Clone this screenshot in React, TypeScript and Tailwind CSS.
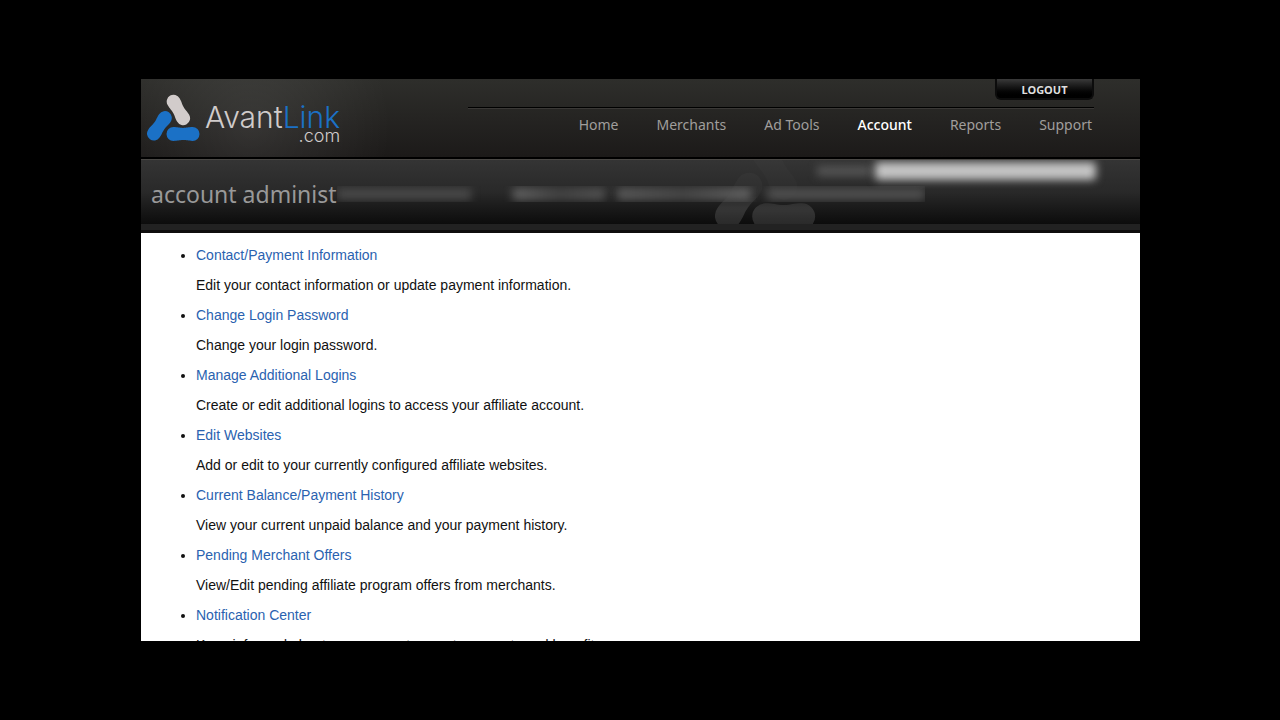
const NAV = ['Home', 'Merchants', 'Ad Tools', 'Account', 'Reports', 'Support'];

const ITEMS = [
  ['Contact/Payment Information', 'Edit your contact information or update payment information.'],
  ['Change Login Password', 'Change your login password.'],
  ['Manage Additional Logins', 'Create or edit additional logins to access your affiliate account.'],
  ['Edit Websites', 'Add or edit to your currently configured affiliate websites.'],
  ['Current Balance/Payment History', 'View your current unpaid balance and your payment history.'],
  ['Pending Merchant Offers', 'View/Edit pending affiliate program offers from merchants.'],
  ['Notification Center', 'Keep informed about your account, recent payments and benefits.'],
];

const BONE =
  'M-9.6 -6.9C-5 -6.9 -4 -6 0 -6S5 -6.9 9.6 -6.9A6.9 6.9 0 0 1 9.6 6.9C5 6.9 4 6 0 6S-5 6.9 -9.6 6.9A6.9 6.9 0 0 1 -9.6 -6.9Z';

function LogoMark({ className, top, base }: { className: string; top: string; base: string }) {
  return (
    <svg className={className} viewBox="0 0 54 48" aria-hidden="true">
      <path d={BONE} fill={top} transform="translate(31.4 15.9) rotate(60)" />
      <path d={BONE} fill={base} transform="translate(12.4 31.8) rotate(-55)" />
      <path d={BONE} fill={base} transform="translate(36 40)" />
    </svg>
  );
}

function Header() {
  return (
    <header className="flex h-20 shrink-0 justify-between border-b-2 border-black bg-[radial-gradient(circle_at_110px_48px,#ffffff16,transparent_140px),linear-gradient(#2e2e2b,#1c1a19)] pl-1.5">
      <a href="#" className="flex items-start pt-[15px]">
        <LogoMark className="h-12 w-[54px]" top="#d2cccb" base="#1b71c6" />
        <span className="flex flex-col items-end pl-1 pt-2.5 font-['Inter',sans-serif] font-light text-[#d0cccb]">
          <span className="text-3xl leading-[26px]">
            Avant<span className="text-[#1b71c6]">Link</span>
          </span>
          <span className="-mt-0.5 text-lg leading-4">.com</span>
        </span>
      </a>
      <div className="mr-[46px] flex w-[63%] flex-col font-['Noto_Sans',sans-serif]">
        <button
          type="button"
          className="h-[21px] w-[99px] self-end rounded-b-md border-2 border-t-0 border-[#0c0c0c] bg-linear-to-b from-[#3a3a3a] to-black pt-0.5 text-[11px] font-bold leading-4 text-[#dedede]"
        >
          LOGOUT
        </button>
        <nav className="mt-[7px] flex justify-end gap-[38px] border-t border-black pr-0.5 pt-[7px] text-sm text-[#a09e9c] shadow-[inset_0_1px_#3a3836]">
          {NAV.map((n) => (
            <a key={n} href="#" className={n === 'Account' ? 'font-medium text-white' : ''}>
              {n}
            </a>
          ))}
        </nav>
      </div>
    </header>
  );
}

function TitleBar() {
  return (
    <div className="shrink-0 border-b-3 border-[#0e0d0d]">
      <div className="relative flex h-[65px] items-center overflow-hidden border-t border-[#4a4845] bg-linear-to-b from-[#343434] via-[#292929] to-[#0c0c0c] pl-2.5 pt-1">
        <LogoMark
          className="absolute -top-5 left-[574px] h-[92px] w-[103px] opacity-12 [mask-image:linear-gradient(#0003_60%,#000_75%)]"
          top="#aaa"
          base="#fff"
        />
        <h1 className="font-['Noto_Sans',sans-serif] text-[23px] text-[#999]">account administ</h1>
        <div className="flex h-4 items-center overflow-hidden" aria-hidden="true">
          <span className="mr-[42px] h-3 w-[134px] bg-[#484848] blur-[4px]" />
          <span className="mr-3 h-3 w-[92px] bg-linear-to-r from-[#666] via-[#444] to-[#555] blur-[5px]" />
          <span className="mr-4 h-3 w-[134px] bg-linear-to-r from-[#5c5c5c] via-[#484848] to-[#666] blur-[5px]" />
          <span className="h-3 w-[158px] bg-[#505050] blur-[5px]" />
        </div>
        <div className="absolute right-11 top-0.5 flex items-center gap-1" aria-hidden="true">
          <span className="h-2.5 w-[54px] bg-[#555] blur-[4px]" />
          <span className="h-[18px] w-[221px] rounded-sm bg-[#c4c4c4] blur-[4px]" />
        </div>
      </div>
      <div className="h-1.5 bg-[#222]" />
    </div>
  );
}

export default function App() {
  return (
    <div className="h-screen bg-black py-[79px] pl-[141px] pr-[140px] font-['Liberation_Sans',Arial,sans-serif]">
      <div className="flex h-full flex-col overflow-hidden bg-white">
        <Header />
        <TitleBar />
        <ul className="list-disc pl-[55px] pt-[7px] text-sm leading-[30px] text-[#111]">
          {ITEMS.map(([title, text]) => (
            <li key={title}>
              <a href="#" className="text-[#2a62b0]">
                {title}
              </a>
              <p>{text}</p>
            </li>
          ))}
        </ul>
      </div>
    </div>
  );
}
